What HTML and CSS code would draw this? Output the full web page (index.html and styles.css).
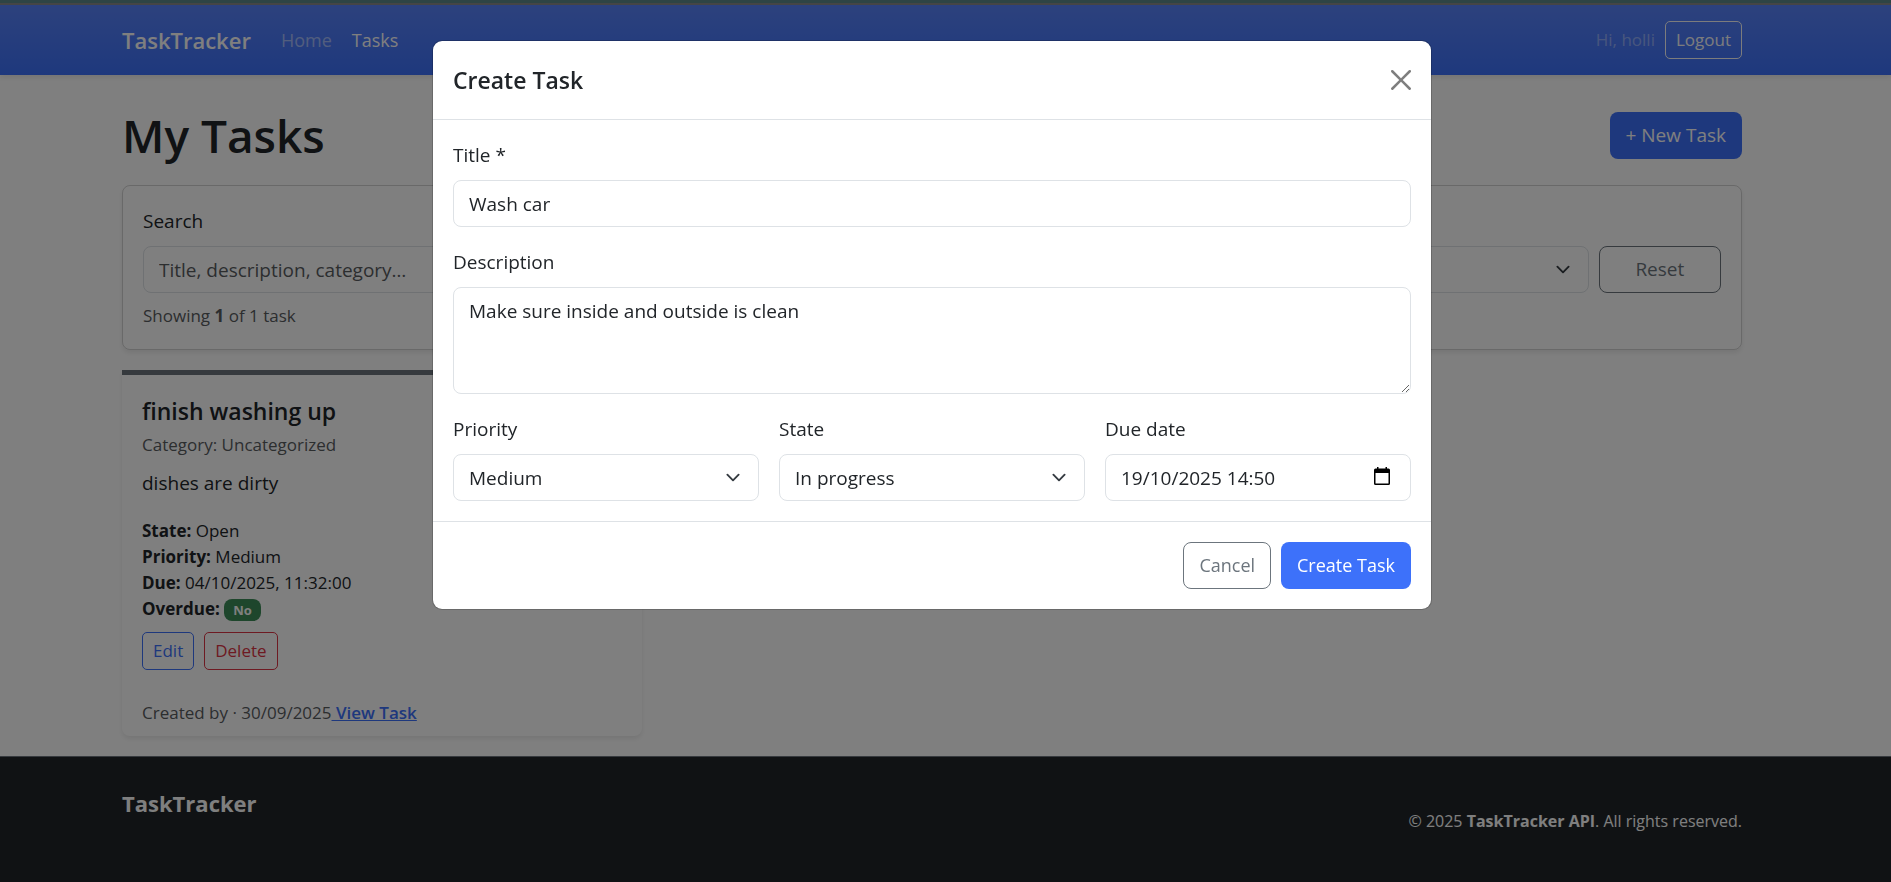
FILE: index.html
```html
<!DOCTYPE html>
<html lang="en-GB">
<head>
  <meta charset="utf-8">
  <meta name="viewport" content="width=device-width, initial-scale=1">
  <title>TaskTracker</title>
  <link rel="stylesheet" href="styles.css">
</head>
<body>
  <header class="navbar">
    <div class="container navbar-inner">
      <a class="brand" href="#">TaskTracker</a>
      <nav class="nav">
        <a class="nav-link" href="#">Home</a>
        <a class="nav-link active" href="#">Tasks</a>
      </nav>
      <span class="greeting">Hi, holli</span>
      <button class="btn btn-sm btn-outline-light" type="button">Logout</button>
    </div>
  </header>

  <div class="content">
    <main class="container main">
      <div class="page-head">
        <h1>My Tasks</h1>
        <button class="btn btn-primary" type="button">+ New Task</button>
      </div>

      <form class="filters">
        <div class="filter-search">
          <label class="label" for="search">Search</label>
          <input class="control" id="search" type="text" placeholder="Title, description, category…">
        </div>
        <select class="control select filter-sort" aria-label="Sort by"><option></option></select>
        <button class="btn btn-outline-secondary filter-reset" type="button">Reset</button>
        <p class="filter-count muted">Showing <strong>1</strong> of 1 task</p>
      </form>

      <div class="task-grid">
        <article class="task">
          <div class="task-body">
            <h2>finish washing up</h2>
            <p class="small muted">Category: Uncategorized</p>
            <p class="task-text">dishes are dirty</p>
            <ul class="facts small">
              <li><strong>State:</strong> Open</li>
              <li><strong>Priority:</strong> Medium</li>
              <li><strong>Due:</strong> 04/10/2025, 11:32:00</li>
              <li><strong>Overdue:</strong> <span class="badge">No</span></li>
            </ul>
            <div class="task-actions">
              <button class="btn btn-sm btn-outline-primary" type="button">Edit</button>
              <button class="btn btn-sm btn-outline-danger" type="button">Delete</button>
            </div>
          </div>
          <div class="task-foot small muted">Created by · 30/09/2025<a class="task-link" href="#"> View Task</a></div>
        </article>
      </div>
    </main>
  </div>

  <footer class="footer">
    <div class="container footer-inner">
      <span class="footer-brand">TaskTracker</span>
      <span class="footer-note">© 2025 <strong>TaskTracker API</strong>. All rights reserved.</span>
    </div>
  </footer>

  <div class="backdrop">
    <form class="modal" role="dialog" aria-modal="true" aria-labelledby="modal-title">
      <div class="modal-head">
        <h2 id="modal-title">Create Task</h2>
        <button class="close" type="button" aria-label="Close">
          <svg viewBox="0 0 16 16" width="20" height="20" aria-hidden="true"><path d="M.293.293a1 1 0 0 1 1.414 0L8 6.586 14.293.293a1 1 0 1 1 1.414 1.414L9.414 8l6.293 6.293a1 1 0 0 1-1.414 1.414L8 9.414l-6.293 6.293a1 1 0 0 1-1.414-1.414L6.586 8 .293 1.707a1 1 0 0 1 0-1.414z"/></svg>
        </button>
      </div>
      <div class="modal-body">
        <div>
          <label class="label" for="title">Title *</label>
          <input class="control" id="title" type="text" value="Wash car">
        </div>
        <div>
          <label class="label" for="description">Description</label>
          <textarea class="control" id="description" rows="3">Make sure inside and outside is clean</textarea>
        </div>
        <div class="modal-row">
          <div>
            <label class="label" for="priority">Priority</label>
            <select class="control select" id="priority"><option>Medium</option></select>
          </div>
          <div>
            <label class="label" for="state">State</label>
            <select class="control select" id="state"><option>In progress</option></select>
          </div>
          <div>
            <label class="label" for="due">Due date</label>
            <div class="date">
              <input class="control" id="due" type="text" value="19/10/2025 14:50">
              <button class="date-picker" type="button" aria-label="Choose date">
                <svg viewBox="0 0 16 18" width="16" height="18" aria-hidden="true"><path fill-rule="evenodd" d="M1.500 1.500H3V0h1.500v1.500h7V0H13v1.500h1.500A1.500 1.500 0 0 1 16 3v13.500a1.500 1.500 0 0 1-1.500 1.500h-13A1.500 1.500 0 0 1 0 16.500V3a1.500 1.500 0 0 1 1.500-1.500zM1.500 6v10.500h13V6z"/></svg>
              </button>
            </div>
          </div>
        </div>
      </div>
      <div class="modal-foot">
        <button class="btn btn-outline-secondary" type="button">Cancel</button>
        <button class="btn btn-primary" type="submit">Create Task</button>
      </div>
    </form>
  </div>
</body>
</html>
```
FILE: styles.css
```css
:root {
  --primary: #3d71fa;
  --ink: #212529;
  --muted: #6c757d;
  --line: #dee2e6;
  --text: 19px;
  --text-md: 18px;
  --text-sm: 17px;
  --text-xs: 16px;
  --text-brand: 22px;
  --text-lg: 23px;
  --gutter: 27px;
}

*, *::before, *::after { box-sizing: border-box; }

body {
  display: flex;
  flex-direction: column;
  min-height: 100vh;
  margin: 0;
  font-family: "Open Sans", "Noto Sans", sans-serif;
  font-size: var(--text);
  line-height: 30px;
  color: var(--ink);
  background: #fff;
}

h1, h2, p, ul { margin: 0; }
h2 { font-size: var(--text-lg); font-weight: 600; line-height: 30px; }
strong { font-weight: 700; }

.container { width: 100%; max-width: 1650px; margin: 0 auto; padding: 0 15px; }
.small { font-size: var(--text-sm); line-height: 26px; }
.muted { color: #595c5f; }

.navbar, .content, .footer { padding-right: var(--gutter); }

/* Controls */
.btn {
  padding: 8px 15px;
  border: 1px solid transparent;
  border-radius: 8px;
  background: transparent;
  font: inherit;
  line-height: 29px;
  white-space: nowrap;
}
.btn-sm { padding: 5px 10px; border-radius: 5px; font-size: var(--text-sm); line-height: 26px; }
.btn-primary { background: var(--primary); color: #fff; }
.btn-outline-light { border-color: #f8f9fa; color: #f8f9fa; }
.btn-outline-secondary { border-color: var(--muted); color: var(--muted); }
.btn-outline-primary { border-color: var(--primary); color: var(--primary); }
.btn-outline-danger { border-color: #dc3545; color: #dc3545; }

.label { display: block; margin-bottom: 10px; }
.control {
  display: block;
  width: 100%;
  height: 47px;
  padding: 8px 15px;
  border: 1px solid var(--line);
  border-radius: 8px;
  background: #fff;
  color: var(--ink);
  font: inherit;
  line-height: 30px;
}
.control::placeholder { color: #595c5f; opacity: 1; }
textarea.control { height: 107px; resize: vertical; }
.select {
  appearance: none;
  background: #fff url("data:image/svg+xml,%3csvg xmlns='http://www.w3.org/2000/svg' viewBox='0 0 16 16'%3e%3cpath fill='none' stroke='%23343a40' stroke-linecap='round' stroke-linejoin='round' stroke-width='2' d='m2 5 6 6 6-6'/%3e%3c/svg%3e") no-repeat right 15px center / 20px 15px;
}

/* Header */
.navbar {
  border-top: 3px solid #5c8888;
  background: linear-gradient(#8a8a8a 2px, transparent 2px), linear-gradient(180deg, #5a84fb, #3d71fa);
  box-shadow: 0 3px 5px rgba(0, 0, 0, .08);
}
.navbar-inner { display: flex; align-items: center; gap: 10px; padding-top: 18px; padding-bottom: 16px; }
.brand { color: #fff; font-size: var(--text-brand); font-weight: 600; line-height: 38px; text-decoration: none; }
.nav { display: flex; flex: 1; gap: 20px; margin-left: 20px; font-size: var(--text-md); }
.nav-link { color: rgba(255, 255, 255, .5); text-decoration: none; }
.nav-link.active { color: #fff; }
.greeting { color: rgba(255, 255, 255, .4); font-size: var(--text-sm); }

/* Page */
.content { flex: 1; }
.main { display: flex; flex-direction: column; gap: 20px; padding-top: 30px; padding-bottom: 20px; }
.page-head { display: flex; align-items: center; justify-content: space-between; }
h1 { font-size: 46px; font-weight: 600; line-height: 60px; }

.filters {
  display: grid;
  grid-template-columns: repeat(12, 1fr);
  align-items: end;
  gap: 10px;
  padding: 20px;
  border: 1px solid rgba(0, 0, 0, .175);
  border-radius: 8px;
  box-shadow: 0 3px 5px rgba(0, 0, 0, .08);
}
.filter-search { grid-column: span 9; }
.filter-sort { grid-column: span 2; }
.filter-count { grid-column: 1 / -1; font-size: var(--text-sm); line-height: 26px; }

.task-grid { display: grid; grid-template-columns: repeat(3, 1fr); gap: 30px; }
.task {
  border-top: 5px solid var(--muted);
  border-radius: 0 0 8px 8px;
  box-shadow: 0 3px 5px rgba(0, 0, 0, .08);
}
.task-body { padding: 21px 20px 30px; }
.task-body h2 { margin-bottom: 6px; }
.task-text { margin: 10px 0 20px; }
.facts { padding: 0; list-style: none; }
.badge {
  display: inline-block;
  padding: 3px 9px;
  border-radius: 8px;
  background: #3c8c58;
  color: #fff;
  font-size: 13px;
  font-weight: 700;
  line-height: 16px;
}
.task-actions { display: flex; gap: 10px; margin-top: 10px; }
.task-foot { padding: 0 20px 10px; }
.task-link { color: var(--primary); font-weight: 600; white-space: pre; }

/* Footer */
.footer { border-top: 1px solid #6c757d; background: var(--ink); color: #fff; }
.footer-inner { display: flex; justify-content: space-between; padding-top: 31px; padding-bottom: 48px; }
.footer-brand { font-size: var(--text-brand); font-weight: 700; }
.footer-note { padding-top: 20px; font-size: var(--text-xs); line-height: 26px; }

/* Modal */
.backdrop {
  position: fixed;
  inset: 0;
  display: flex;
  align-items: flex-start;
  justify-content: center;
  padding: 40px var(--gutter) 40px 0;
  overflow: auto;
  background: rgba(0, 0, 0, .5);
}
.modal {
  width: 100%;
  max-width: 1000px;
  border: 1px solid rgba(0, 0, 0, .175);
  border-radius: 10px;
  background: #fff;
  background-clip: padding-box;
}
.modal-head {
  display: flex;
  align-items: center;
  justify-content: space-between;
  padding: 24px 20px;
  border-bottom: 1px solid var(--line);
}
.close { display: flex; padding: 0; border: 0; background: none; opacity: .5; }
.modal-body { display: grid; gap: 20px; padding: 20px; }
.modal-row { display: grid; grid-template-columns: repeat(3, 1fr); gap: 20px; }
.date { position: relative; }
.date-picker { position: absolute; top: 13px; right: 21px; display: flex; padding: 0; border: 0; background: none; }
.modal-foot { display: flex; justify-content: flex-end; gap: 10px; padding: 20px; border-top: 1px solid var(--line); font-size: var(--text-md); }
```
